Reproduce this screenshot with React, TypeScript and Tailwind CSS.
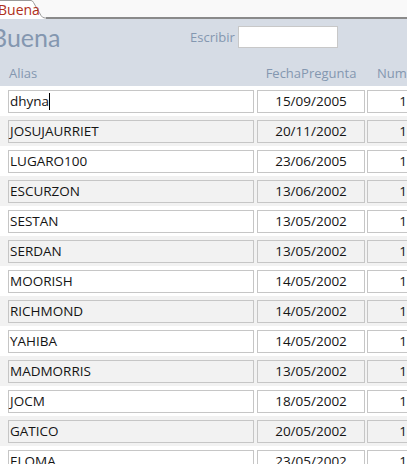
const rows = [
    { alias: "dhyna", fecha: "15/09/2005", num: "1" },
    { alias: "JOSUJAURRIET", fecha: "20/11/2002", num: "1" },
    { alias: "LUGARO100", fecha: "23/06/2005", num: "1" },
    { alias: "ESCURZON", fecha: "13/06/2002", num: "1" },
    { alias: "SESTAN", fecha: "13/05/2002", num: "1" },
    { alias: "SERDAN", fecha: "13/05/2002", num: "1" },
    { alias: "MOORISH", fecha: "14/05/2002", num: "1" },
    { alias: "RICHMOND", fecha: "14/05/2002", num: "1" },
    { alias: "YAHIBA", fecha: "14/05/2002", num: "1" },
    { alias: "MADMORRIS", fecha: "13/05/2002", num: "1" },
    { alias: "JOCM", fecha: "18/05/2002", num: "1" },
    { alias: "GATICO", fecha: "20/05/2002", num: "1" },
    { alias: "ELOMA", fecha: "23/05/2002", num: "1" },
];

export default function App() {
    return (
        <div className="w-[407px] h-[464px] overflow-hidden bg-white font-['Open_Sans',sans-serif] text-[#141414]">
            {/* Tab strip */}
            <div className="h-[19px] bg-[#f9f9f9] flex">
                <div className="relative w-[46px] h-[19px] shrink-0">
                    <svg className="absolute inset-0" width="46" height="19" viewBox="0 0 46 19">
                        <path d="M0 0 H31 Q32.5 0 33.5 2 L41 15.5 Q42.5 18 45 18 H46 V19 H0 Z" fill="#ffffff" />
                        <path d="M0 0.5 H31 Q32.5 0.5 33.5 2.5 L41 15.5 Q42.5 18 45 18 H46" fill="none" stroke="#9a9a9a" strokeWidth="1" />
                    </svg>
                    <span className="relative block -ml-[2px] pt-[1px] text-[14px] leading-[17px] text-[#b0301c]">Buena</span>
                </div>
                <div className="flex-1 border-b-[2px] border-[#8a8a8a]" />
            </div>

            {/* Form header */}
            <div className="h-[67px] bg-[#d6dce5] text-[#8497b0]">
                <div className="flex items-start h-[40px]">
                    <div className="w-[190px] shrink-0 -ml-[9px] font-['Lato',sans-serif] text-[25px] leading-[36px]">Buena</div>
                    <div className="ml-[9px] pt-[9px] text-[13px] leading-[18px]">Escribir</div>
                    <div className="ml-[3px] mt-[7px] w-[100px] h-[22px] bg-white border border-[#c8c8c8]" />
                </div>
                <div className="flex text-[13px] leading-[18px] pt-[5px]">
                    <div className="w-[257px] shrink-0 pl-[9px]">Alias</div>
                    <div className="w-[108px] shrink-0 text-center">FechaPregunta</div>
                    <div className="pl-[12px]">Num</div>
                </div>
            </div>

            {/* Records */}
            <div>
                {rows.map((r, i) => {
                    const bg = i % 2 === 1 ? "bg-[#f2f2f2]" : "bg-white";
                    return (
                        <div key={i} className={`h-[30px] flex pt-[4px] text-[13.5px] ${bg}`}>
                            <div className={`ml-[8px] w-[246px] shrink-0 h-[23px] border border-[#c6c6c6] px-[1px] flex items-center ${bg}`}>
                                <span className="leading-[21px]">{r.alias}</span>
                                {i === 0 && <span className="w-[1px] h-[17px] bg-black" />}
                            </div>
                            <div className={`ml-[3px] w-[108px] shrink-0 h-[23px] border border-[#c6c6c6] text-center leading-[21px] ${bg}`}>
                                {r.fecha}
                            </div>
                            <div className={`ml-[2px] w-[48px] shrink-0 h-[23px] border border-[#c6c6c6] text-right pr-[7px] leading-[21px] ${bg}`}>
                                {r.num}
                            </div>
                        </div>
                    );
                })}
            </div>
        </div>
    );
}
